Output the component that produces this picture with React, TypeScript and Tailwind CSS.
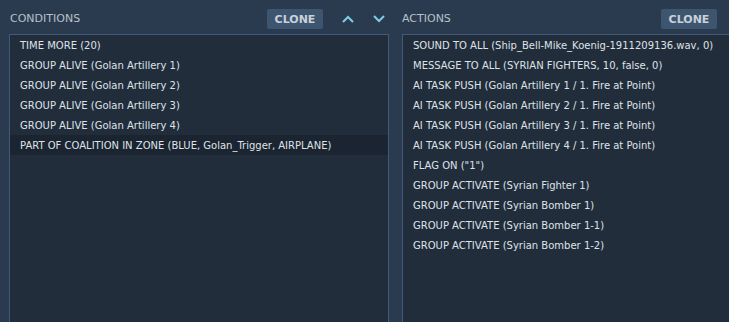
const conditions = [
  'TIME MORE (20)',
  'GROUP ALIVE (Golan Artillery 1)',
  'GROUP ALIVE (Golan Artillery 2)',
  'GROUP ALIVE (Golan Artillery 3)',
  'GROUP ALIVE (Golan Artillery 4)',
  'PART OF COALITION IN ZONE (BLUE, Golan_Trigger, AIRPLANE)',
];

const actions = [
  'SOUND TO ALL (Ship_Bell-Mike_Koenig-1911209136.wav, 0)',
  'MESSAGE TO ALL (SYRIAN FIGHTERS, 10, false, 0)',
  'AI TASK PUSH (Golan Artillery 1 / 1. Fire at Point)',
  'AI TASK PUSH (Golan Artillery 2 / 1. Fire at Point)',
  'AI TASK PUSH (Golan Artillery 3 / 1. Fire at Point)',
  'AI TASK PUSH (Golan Artillery 4 / 1. Fire at Point)',
  'FLAG ON ("1")',
  'GROUP ACTIVATE (Syrian Fighter 1)',
  'GROUP ACTIVATE (Syrian Bomber 1)',
  'GROUP ACTIVATE (Syrian Bomber 1-1)',
  'GROUP ACTIVATE (Syrian Bomber 1-2)',
];

const Chevron = ({ up }: { up?: boolean }) => (
  <svg width="14" height="10" viewBox="0 0 14 10" fill="none">
    <path
      d={up ? 'M2 8 L7 3 L12 8' : 'M2 2 L7 7 L12 2'}
      stroke="#7fcde6"
      strokeWidth="2"
    />
  </svg>
);

const CloneButton = () => (
  <button className="h-[20px] w-[56px] rounded-[2px] bg-[#3e5570] text-[11px] font-bold text-[#c9d1d9] leading-none">
    CLONE
  </button>
);

const Row = ({ text, active }: { text: string; active?: boolean }) => (
  <div className={`h-[20px] flex items-center pl-[10px] whitespace-nowrap ${active ? 'bg-[#1b2431]' : ''}`}>
    {text}
  </div>
);

export default function App() {
  return (
    <div
      className="w-[729px] h-[322px] bg-[#2b3b4f] flex overflow-hidden text-[10px] text-[#dfe3e7]"
      style={{ fontFamily: '"DejaVu Sans", sans-serif' }}
    >
      <div className="w-[389px] shrink-0 flex flex-col pl-[9px]">
        <div className="h-[34px] shrink-0 flex items-center pt-[4px] pr-[3px]">
          <span className="flex-1 pl-[1px] text-[11px] text-[#b7c1cb]">CONDITIONS</span>
          <CloneButton />
          <div className="ml-[18px] flex gap-[17px]">
            <Chevron up />
            <Chevron />
          </div>
        </div>
        <div className="flex-1 border-t border-l border-r border-[#43597a] bg-[#222d3c]">
          {conditions.map((c, i) => (
            <Row key={c} text={c} active={i === 5} />
          ))}
        </div>
      </div>
      <div className="flex-1 min-w-0 flex flex-col pl-[13px]">
        <div className="h-[34px] shrink-0 flex items-center pt-[4px] pr-[12px]">
          <span className="flex-1 text-[11px] text-[#b7c1cb]">ACTIONS</span>
          <CloneButton />
        </div>
        <div className="flex-1 border-t border-l border-[#43597a] bg-[#222d3c]">
          {actions.map((a) => (
            <Row key={a} text={a} />
          ))}
        </div>
      </div>
    </div>
  );
}
